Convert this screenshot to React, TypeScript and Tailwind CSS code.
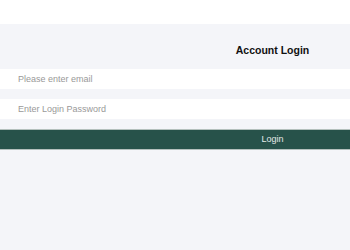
import React from "react";

const App: React.FC = () => {
  return (
    <div className="w-[350px] h-[250px] overflow-hidden bg-white font-['Liberation_Sans',Arial,sans-serif]">
      {/* top bar */}
      <div className="h-[24px] bg-white" />

      {/* login panel */}
      <div className="w-[545px] h-[226px] bg-[#f4f5f9]">
        <div className="pt-[16px] h-[45px] text-center">
          <h1 className="text-[10.5px] leading-[20px] font-bold text-[#111]">Account Login</h1>
        </div>

        <div className="flex flex-col gap-[10px]">
          <input
            type="email"
            placeholder="Please enter email"
            className="h-[20px] bg-white pl-[18px] text-[9px] outline-none placeholder:text-[#999]"
          />
          <input
            type="password"
            placeholder="Enter Login Password"
            className="h-[20px] bg-white pl-[18px] text-[9px] outline-none placeholder:text-[#999]"
          />
          <button className="h-[21px] bg-[#27524a] text-[9px] text-[#e3e9e7] border-y border-[#b4c0bd]">
            Login
          </button>
        </div>
      </div>
    </div>
  );
};

export default App;
